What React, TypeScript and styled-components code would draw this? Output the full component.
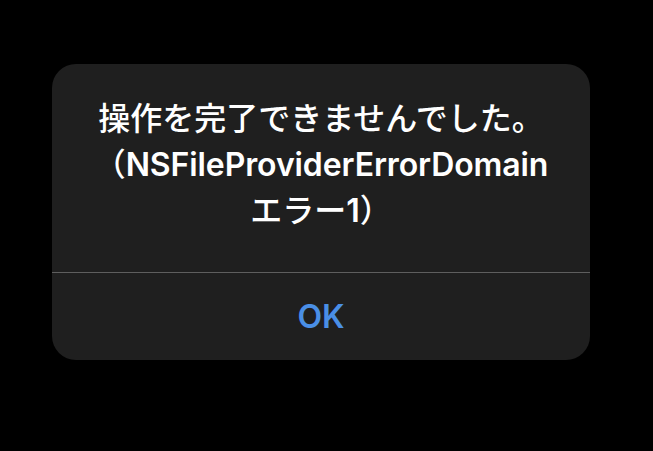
import styled, { createGlobalStyle } from "styled-components";

const GlobalStyle = createGlobalStyle`
  html, body {
    margin: 0;
    padding: 0;
    background: #000;
  }
  body {
    font-family: Inter, "Noto Sans CJK JP", sans-serif;
    -webkit-font-smoothing: antialiased;
  }
`;

const Page = styled.div`
  width: 653px;
  height: 451px;
  box-sizing: border-box;
  padding: 64px 0 0 52px;
`;

const AlertBox = styled.div`
  width: 538px;
  height: 296px;
  background: #1f1f1f;
  border-radius: 24px;
  display: flex;
  flex-direction: column;
  overflow: hidden;
`;

const AlertBody = styled.div`
  height: 208px;
  box-sizing: border-box;
  padding: 32px 10px 0;
  display: flex;
  justify-content: center;
`;

const AlertTitle = styled.h1`
  margin: 0;
  color: #ffffff;
  font-family: Inter, "Noto Sans CJK JP", sans-serif;
  font-size: 32px;
  font-weight: 500;
  line-height: 46px;
  text-align: center;
`;

// latin part of the title reads a touch heavier than the kana
const Latin = styled.span`
  font-weight: 600;
  letter-spacing: -0.1px;
`;

const Divider = styled.div`
  height: 1px;
  background: #5e5e5e;
`;

const AlertButton = styled.button`
  flex: 1;
  border: none;
  background: transparent;
  color: #4a8fe6;
  font-family: Inter, "Noto Sans CJK JP", sans-serif;
  font-size: 32px;
  font-weight: 600;
  padding: 0;
  cursor: pointer;
`;

function App() {
  return (
    <>
      <GlobalStyle />
      <Page>
        <AlertBox>
          <AlertBody>
            <AlertTitle>
              操作を完了できませんでした。
              <br />
              （<Latin>NSFileProviderErrorDomain</Latin>
              <br />
              エラー<Latin>1</Latin>）
            </AlertTitle>
          </AlertBody>
          <Divider />
          <AlertButton>OK</AlertButton>
        </AlertBox>
      </Page>
    </>
  );
}

export default App;
